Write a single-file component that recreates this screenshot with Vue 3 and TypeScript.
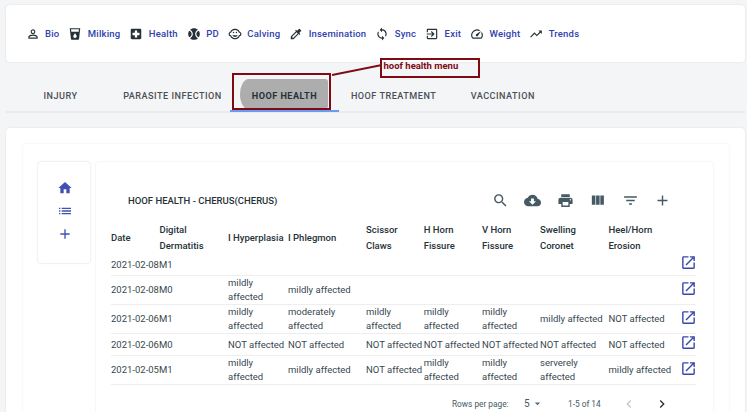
<script setup lang="ts">
const icons: Record<string, string> = {
  bio: 'M12 5.9c1.16 0 2.1.94 2.1 2.1s-.94 2.1-2.1 2.1S9.9 9.16 9.9 8s.94-2.1 2.1-2.1m0 9c2.97 0 6.1 1.46 6.1 2.1v1.1H5.9V17c0-.64 3.13-2.1 6.1-2.1M12 4C9.79 4 8 5.79 8 8s1.79 4 4 4 4-1.79 4-4-1.79-4-4-4zm0 9c-2.67 0-8 1.34-8 4v3h16v-3c0-2.66-5.33-4-8-4z',
  milk: 'M3 2l2.01 18.23C5.13 21.23 5.97 22 7 22h10c1.03 0 1.87-.77 1.99-1.77L21 2H3zm9 17c-1.66 0-3-1.34-3-3 0-2 3-5.4 3-5.4s3 3.4 3 5.4c0 1.66-1.34 3-3 3zm6.33-11H5.67l-.44-4h13.53l-.43 4z',
  health: 'M19 3H5c-1.1 0-1.99.9-1.99 2L3 19c0 1.1.9 2 2 2h14c1.1 0 2-.9 2-2V5c0-1.1-.9-2-2-2zm-1 11h-4v4h-4v-4H6v-4h4V6h4v4h4v4z',
  ball: 'M3.81 6.28C2.67 7.9 2 9.87 2 12s.67 4.1 1.81 5.72C6.23 16.95 8 14.68 8 12S6.23 7.05 3.81 6.28zM20.19 6.28C17.77 7.05 16 9.32 16 12s1.77 4.95 4.19 5.72C21.33 16.1 22 14.13 22 12s-.67-4.1-1.81-5.72zM14 12c0-3.28 1.97-6.09 4.79-7.33C17.01 3.02 14.63 2 12 2S6.99 3.02 5.21 4.67C8.03 5.91 10 8.72 10 12s-1.97 6.09-4.79 7.33C6.99 20.98 9.37 22 12 22s5.01-1.02 6.79-2.67C15.97 18.09 14 15.28 14 12z',
  child: 'M22.94 11.34c-.25-1.51-1.36-2.74-2.81-3.17-.53-1.12-1.28-2.1-2.19-2.91C16.36 3.85 14.28 3 12 3s-4.36.85-5.94 2.26c-.92.81-1.67 1.8-2.19 2.91-1.45.43-2.56 1.65-2.81 3.17-.04.21-.06.43-.06.66s.02.45.06.66c.25 1.51 1.36 2.74 2.81 3.17.52 1.11 1.27 2.09 2.17 2.89C7.62 20.14 9.71 21 12 21s4.38-.86 5.97-2.28c.9-.8 1.65-1.79 2.17-2.89 1.44-.43 2.55-1.65 2.8-3.17.04-.21.06-.43.06-.66s-.02-.45-.06-.66zM19 14c-.1 0-.19-.02-.29-.03-.2.67-.49 1.29-.86 1.86C16.6 17.74 14.45 19 12 19s-4.6-1.26-5.85-3.17c-.37-.57-.66-1.19-.86-1.86-.1.01-.19.03-.29.03-1.1 0-2-.9-2-2s.9-2 2-2c.1 0 .19.02.29.03.2-.67.49-1.29.86-1.86C7.4 6.26 9.55 5 12 5s4.6 1.26 5.85 3.17c.37.57.66 1.19.86 1.86.1-.01.19-.03.29-.03 1.1 0 2 .9 2 2s-.9 2-2 2zM7.5 14c.76 1.77 2.49 3 4.5 3s3.74-1.23 4.5-3h-9zM14.5 8.25a1.25 1.25 0 1 0 0 2.5 1.25 1.25 0 0 0 0-2.5zM9.5 8.25a1.25 1.25 0 1 0 0 2.5 1.25 1.25 0 0 0 0-2.5z',
  dropper: 'M20.71 5.63l-2.34-2.34a.996.996 0 0 0-1.41 0l-3.12 3.12-1.93-1.91-1.41 1.41 1.42 1.42L3 16.25V21h4.75l8.92-8.92 1.42 1.42 1.41-1.41-1.92-1.92 3.12-3.12c.4-.4.4-1.03.01-1.42zM6.92 19L5 17.08l8.06-8.06 1.92 1.92L6.92 19z',
  sync: 'M12 4V1L8 5l4 4V6c3.31 0 6 2.69 6 6 0 1.01-.25 1.97-.7 2.8l1.46 1.46C19.54 15.03 20 13.57 20 12c0-4.42-3.58-8-8-8zm0 14c-3.31 0-6-2.69-6-6 0-1.01.25-1.97.7-2.8L5.24 7.74C4.46 8.97 4 10.43 4 12c0 4.42 3.58 8 8 8v3l4-4-4-4v3z',
  exit: 'M10.09 15.59L11.5 17l5-5-5-5-1.41 1.41L12.67 11H3v2h9.67l-2.58 2.59zM19 3H5c-1.11 0-2 .9-2 2v4h2V5h14v14H5v-4H3v4c0 1.1.89 2 2 2h14c1.1 0 2-.9 2-2V5c0-1.1-.9-2-2-2z',
  speed: 'M20.38 8.57l-1.23 1.85a8 8 0 0 1-.22 7.58H5.07A8 8 0 0 1 15.58 6.85l1.85-1.23A10 10 0 0 0 3.35 19a2 2 0 0 0 1.72 1h13.85a2 2 0 0 0 1.74-1 10 10 0 0 0-.27-10.44zm-9.79 6.84a2 2 0 0 0 2.83 0l5.66-8.49-8.49 5.66a2 2 0 0 0 0 2.83z',
  trend: 'M16 6l2.29 2.29-4.88 4.88-4-4L2 16.59 3.41 18l6-6 4 4 6.3-6.29L22 12V6z',
  home: 'M10 20v-6h4v6h5v-8h3L12 3 2 12h3v8z',
  list: 'M3 13h2v-2H3v2zm0 4h2v-2H3v2zm0-8h2V7H3v2zm4 4h14v-2H7v2zm0 4h14v-2H7v2zM7 7v2h14V7H7z',
  add: 'M19 13h-6v6h-2v-6H5v-2h6V5h2v6h6v2z',
  search: 'M15.5 14h-.79l-.28-.27C15.41 12.59 16 11.11 16 9.5 16 5.91 13.09 3 9.5 3S3 5.91 3 9.5 5.91 16 9.5 16c1.61 0 3.09-.59 4.23-1.57l.27.28v.79l5 4.99L20.49 19l-4.99-5zm-6 0C7.01 14 5 11.99 5 9.5S7.01 5 9.5 5 14 7.01 14 9.5 11.99 14 9.5 14z',
  cloud: 'M19.35 10.04C18.67 6.59 15.64 4 12 4 9.11 4 6.6 5.64 5.35 8.04 2.34 8.36 0 10.91 0 14c0 3.31 2.69 6 6 6h13c2.76 0 5-2.24 5-5 0-2.64-2.05-4.78-4.65-4.96zM17 13l-5 5-5-5h3V9h4v4h3z',
  print: 'M19 8H5c-1.66 0-3 1.34-3 3v6h4v4h12v-4h4v-6c0-1.66-1.34-3-3-3zm-3 11H8v-5h8v5zm3-7c-.55 0-1-.45-1-1s.45-1 1-1 1 .45 1 1-.45 1-1 1zm-1-9H6v4h12V3z',
  column: 'M10 18h5V5h-5v13zm-6 0h5V5H4v13zM16 5v13h5V5h-5z',
  filter: 'M10 18h4v-2h-4v2zM3 6v2h18V6H3zm3 7h12v-2H6v2z',
  open: 'M19 19H5V5h7V3H5c-1.11 0-2 .9-2 2v14c0 1.1.89 2 2 2h14c1.1 0 2-.9 2-2v-7h-2v7zM14 3v2h3.59l-9.83 9.83 1.41 1.41L19 6.41V10h2V3h-7z',
  drop: 'M7 10l5 5 5-5z',
  left: 'M15.41 7.41L14 6l-6 6 6 6 1.41-1.41L10.83 12z',
  right: 'M10 6L8.59 7.41 13.17 12l-4.58 4.59L10 18l6-6z'
}

const navItems = [
  { icon: 'bio', label: 'Bio' },
  { icon: 'milk', label: 'Milking' },
  { icon: 'health', label: 'Health' },
  { icon: 'ball', label: 'PD' },
  { icon: 'child', label: 'Calving' },
  { icon: 'dropper', label: 'Insemination' },
  { icon: 'sync', label: 'Sync' },
  { icon: 'exit', label: 'Exit' },
  { icon: 'speed', label: 'Weight' },
  { icon: 'trend', label: 'Trends' }
]

const tabs = ['INJURY', 'PARASITE INFECTION', 'HOOF HEALTH', 'HOOF TREATMENT', 'VACCINATION']
const sideIcons = ['home', 'list', 'add']
const toolIcons = ['search', 'cloud', 'print', 'column', 'filter', 'add']
const headers = ['Date', 'Digital Dermatitis', 'I Hyperplasia', 'I Phlegmon', 'Scissor Claws', 'H Horn Fissure', 'V Horn Fissure', 'Swelling Coronet', 'Heel/Horn Erosion']

const m = 'mildly affected'
const n = 'NOT affected'
const rows = [
  ['2021-02-08M1', '', '', '', '', '', '', '', ''],
  ['2021-02-08M0', '', m, m, '', '', '', '', ''],
  ['2021-02-06M1', '', m, 'moderately affected', m, m, m, m, n],
  ['2021-02-06M0', '', n, n, n, n, n, n, n],
  ['2021-02-05M1', '', m, m, n, m, m, 'serverely affected', m]
]
</script>

<template>
  <div class="page">
    <section class="card top-card">
      <a v-for="item in navItems" :key="item.label" class="nav-item">
        <svg class="nav-icon" viewBox="0 0 24 24"><path :d="icons[item.icon]" /></svg>
        <span>{{ item.label }}</span>
      </a>
    </section>

    <nav class="tabs">
      <div v-for="(tab, i) in tabs" :key="tab" class="tab" :class="{ active: i === 2 }">
        <span v-if="i === 2" class="pill"></span>
        <span class="tab-label">{{ tab }}</span>
      </div>
      <span class="mark-box"></span>
      <svg class="mark-line" viewBox="0 0 50 12"><line x1="0" y1="11" x2="50" y2="1" /></svg>
      <span class="callout">hoof health menu</span>
    </nav>

    <section class="card body-card">
      <div class="inner-card">
        <aside class="side-card">
          <svg v-for="s in sideIcons" :key="s" class="side-icon" viewBox="0 0 24 24"><path :d="icons[s]" /></svg>
        </aside>
        <div class="main-card">
          <header class="toolbar">
            <h2 class="title">HOOF HEALTH - CHERUS(CHERUS)</h2>
            <div class="tools">
              <svg v-for="t in toolIcons" :key="t" class="tool-icon" viewBox="0 0 24 24"><path :d="icons[t]" /></svg>
            </div>
          </header>
          <table class="grid">
            <colgroup>
              <col class="c-date" /><col class="c-dig" /><col class="c-hyp" /><col class="c-phl" /><col class="c-sci" />
              <col class="c-h" /><col class="c-v" /><col class="c-swe" /><col class="c-heel" /><col class="c-act" />
            </colgroup>
            <thead>
              <tr>
                <th v-for="h in headers" :key="h">{{ h }}</th>
                <th></th>
              </tr>
            </thead>
            <tbody>
              <tr v-for="row in rows" :key="row[0]">
                <td v-for="(cell, i) in row" :key="i" :class="{ date: i === 0 }">{{ cell }}</td>
                <td class="act"><svg class="open-icon" viewBox="0 0 24 24"><path :d="icons.open" /></svg></td>
              </tr>
            </tbody>
          </table>
          <footer class="pager">
            <span class="rows-label">Rows per page:</span>
            <span class="rows-value">5</span>
            <svg class="drop" viewBox="0 0 24 24"><path :d="icons.drop" /></svg>
            <span class="range">1-5 of 14</span>
            <svg class="chev off" viewBox="0 0 24 24"><path :d="icons.left" /></svg>
            <svg class="chev" viewBox="0 0 24 24"><path :d="icons.right" /></svg>
          </footer>
        </div>
      </div>
    </section>
  </div>
</template>

<style>
html, body { margin: 0; background: #f4f5f7; overflow: hidden; }
</style>

<style scoped>
.page {
  width: 747px;
  height: 412px;
  box-sizing: border-box;
  padding: 5px 2px 0 6px;
  overflow: hidden;
  font-family: Roboto, "Liberation Sans", sans-serif;
  background: #f4f5f7;
  color: #263238;
}
.card {
  background: #fff;
  border-radius: 4px;
  box-shadow: 0 0 2px rgba(0, 0, 0, 0.12);
}
.top-card {
  height: 57px;
  padding-left: 19.5px;
  box-sizing: border-box;
  display: flex;
  align-items: center;
  gap: 8.9px;
}
.nav-item {
  display: flex;
  align-items: center;
  gap: 5.5px;
  font-size: 9.5px;
  font-weight: 500;
  letter-spacing: 0.2px;
  color: #2f41ad;
}
.nav-icon { width: 14px; height: 14px; fill: #263238; flex: none; }
.tabs {
  position: relative;
  margin-top: 10px;
  height: 39px;
  display: flex;
  border-bottom: 2px solid #e8eaed;
}
.tab {
  position: relative;
  min-width: 109.2px;
  box-sizing: border-box;
  padding: 9px 8px 0;
  display: flex;
  align-items: center;
  justify-content: center;
  font-size: 9.1px;
  font-weight: 500;
  letter-spacing: 0.5px;
  color: #4a4f55;
  white-space: nowrap;
}
.tab.active {
  color: #263238;
  font-weight: 700;
}
.tab.active::after {
  content: "";
  position: absolute;
  left: 0;
  right: 0;
  bottom: -1px;
  height: 2px;
  background: #6b9af0;
}
.tab-label { position: relative; }
.pill {
  position: absolute;
  left: 10px;
  right: 11px;
  top: 7px;
  bottom: 1px;
  background: #adadad;
  border-radius: 9px 3px 10px 10px / 16px 3px 4px 16px;
}
.mark-box {
  position: absolute;
  left: 226px;
  top: 1px;
  width: 99px;
  height: 37px;
  box-sizing: border-box;
  border: 2.5px solid #7f0a14;
}
.mark-line {
  position: absolute;
  left: 326px;
  top: -8px;
  width: 50px;
  height: 12px;
  stroke: #7f0a14;
  stroke-width: 1.8;
}
.callout {
  position: absolute;
  left: 373.5px;
  top: -14px;
  width: 100px;
  height: 20px;
  box-sizing: border-box;
  border: 2.5px solid #7f0a14;
  color: #7f0a14;
  font-size: 9.5px;
  font-weight: 700;
  padding: 0 0 0 2px;
  line-height: 12px;
}
.body-card {
  margin-top: 15px;
  height: 300px;
  padding: 16px 16px 0 17px;
  box-sizing: border-box;
}
.inner-card {
  height: 100%;
  border-radius: 4px 4px 0 0;
  box-shadow: 0 0 2px rgba(0, 0, 0, 0.1);
  padding: 18px 16px 0 15px;
  display: flex;
  gap: 6px;
  box-sizing: border-box;
}
.side-card {
  width: 52px;
  height: 101px;
  flex: none;
  box-sizing: border-box;
  border-radius: 3px;
  box-shadow: 0 0 2px rgba(0, 0, 0, 0.2);
  padding-top: 18px;
  display: flex;
  flex-direction: column;
  align-items: center;
  gap: 7px;
}
.side-icon { width: 16px; height: 16px; fill: #3f51b5; margin-left: 1px; }
.main-card {
  flex: 1;
  border-radius: 3px 3px 0 0;
  box-shadow: 0 0 2px rgba(0, 0, 0, 0.12);
  padding: 0 17px 0 15px;
  min-width: 0;
}
.toolbar {
  height: 59px;
  padding: 18px 0 0 17px;
  box-sizing: border-box;
  display: flex;
  align-items: center;
  justify-content: space-between;
}
.title {
  margin: 0;
  font-size: 9.5px;
  font-weight: 500;
  color: #263238;
}
.tools {
  display: flex;
  align-items: center;
  gap: 15.5px;
  padding-right: 25px;
}
.tool-icon { width: 17px; height: 17px; fill: #455a64; flex: none; }
.grid {
  table-layout: fixed;
  width: 585px;
  border-collapse: collapse;
  font-size: 9.5px;
  line-height: 14px;
  color: #37474f;
}
.c-date { width: 48.5px; }
.c-dig { width: 68.5px; }
.c-hyp { width: 60px; }
.c-phl { width: 78px; }
.c-sci { width: 57.7px; }
.c-h { width: 58.3px; }
.c-v { width: 58px; }
.c-swe { width: 68.5px; }
.c-heel { width: 72.5px; }
.c-act { width: 15px; }
th {
  padding: 1px 0 0;
  height: 32px;
  text-align: left;
  vertical-align: middle;
  font-weight: 500;
  line-height: 16px;
  color: #263238;
}
td {
  padding: 0;
  height: 20px;
  vertical-align: middle;
  border-bottom: 1px solid #eeeeee;
}
td.date { white-space: nowrap; }
td.act { text-align: left; }
.open-icon { width: 17px; height: 17px; fill: #3949ab; display: block; margin: 0 0 4px -1px; }
.pager {
  height: 37px;
  display: flex;
  align-items: center;
  font-size: 8.3px;
  color: #455a64;
  padding-left: 341px;
}
.rows-label { width: 72px; flex: none; }
.rows-value { font-size: 10px; width: 7px; flex: none; }
.drop { width: 13px; height: 13px; fill: #546e7a; flex: none; margin-right: 24px; }
.range { width: 50px; flex: none; }
.chev { width: 16px; height: 16px; fill: #263238; flex: none; margin-left: 3px; margin-right: 14px; }
.chev.off { fill: #c4c8cc; }
</style>
